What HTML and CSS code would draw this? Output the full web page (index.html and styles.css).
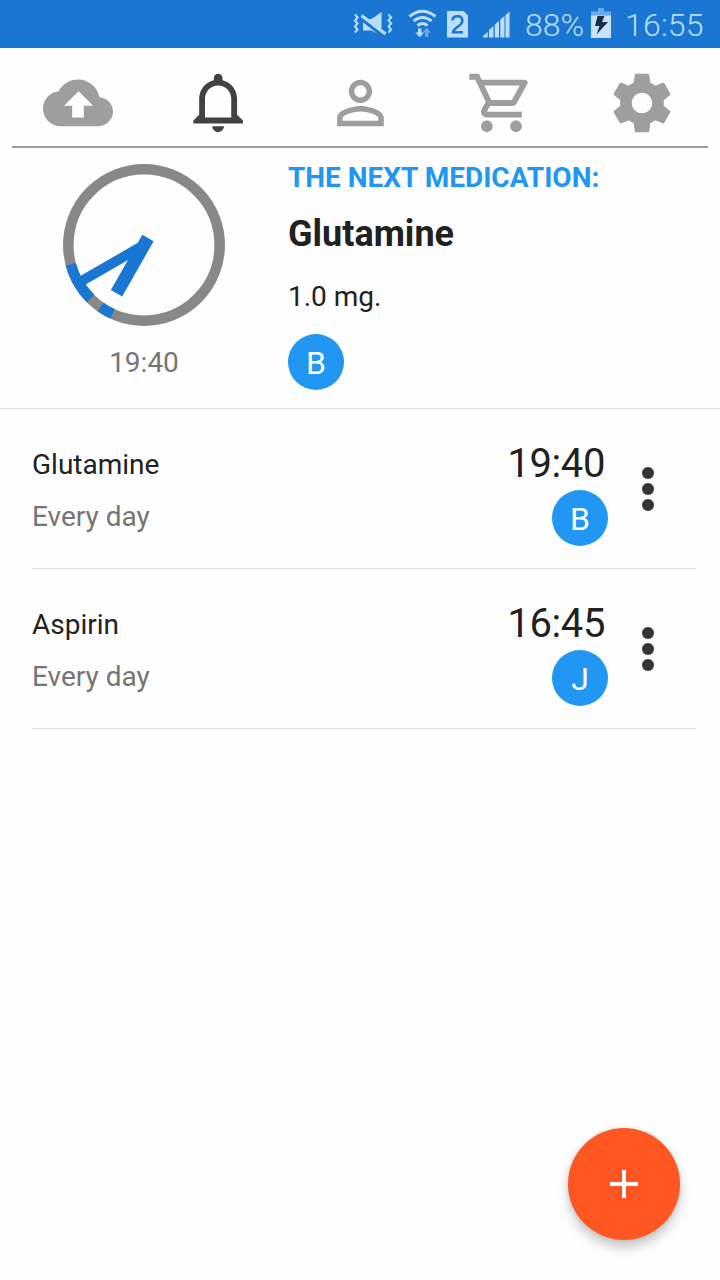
FILE: index.html
```html
<!DOCTYPE html>
<html lang="en">
<head>
<meta charset="utf-8">
<title>Medication reminders</title>
<link rel="stylesheet" href="styles.css">
</head>
<body>
<div class="app">
  <header class="status">
    <svg class="st-mute" width="40" height="48" viewBox="353 0 40 48">
      <g fill="none" stroke="#bbdefb" stroke-width="2"><path d="M355 14.500l2.600 3-2.600 3 2.600 3-2.600 3 2.600 3-2.600 3M388.500 14.500l2.600 3-2.600 3 2.600 3-2.600 3 2.600 3-2.600 3"/></g>
      <path fill="#bbdefb" d="M363 19h8.500L381.500 12V35.500L371.500 30.500H363z"/>
      <path d="M361 17L384.500 35.500" stroke="#1976d2" stroke-width="6"/>
      <path d="M361.500 15.500L385.500 34" stroke="#bbdefb" stroke-width="3.200"/>
    </svg>
    <svg class="st-wifi" width="30" height="48" viewBox="408 0 30 48">
      <g fill="none" stroke="#bbdefb" stroke-width="3"><path d="M409.500 16.500q13-10.500 26 0M413.500 21q9-7 18 0M417.500 25.500q5-4 10 0"/></g>
      <path fill="#bbdefb" d="M418 28.500h3.500v4h2.700l-4.400 4.800-4.500-4.800h2.700z"/>
      <path fill="#64a8e6" d="M426.700 27.500l4.200 5h-2.500V37h-3.300v-4.500h-2.600z"/>
    </svg>
    <svg class="st-sim" width="22" height="48" viewBox="447 0 22 48">
      <path fill="#bbdefb" d="M447 11h16.500l4.500 4.500V37.500h-21z"/>
      <path d="M452.500 20.500q0-4.200 5-4.200 4.800 0 4.800 4.200 0 2.700-3.300 5.300-5.700 4-6 6.400h10" fill="none" stroke="#1976d2" stroke-width="2.600"/>
    </svg>
    <svg class="st-signal" width="29" height="48" viewBox="482 0 29 48">
      <path fill="#bbdefb" d="M483 37.500v-1.500l4.700-4v5.500zM489 37.500v-7.500l4.500-4v11.500zM494.800 37.500v-13l4.200-3.500v16.500zM500.300 37.500v-18l4.200-3.500v21.500zM505.500 37.500v-22.500l4-3.400v25.900z"/>
    </svg>
    <span class="st-pct">88%</span>
    <svg class="st-batt" width="20" height="48" viewBox="591 0 20 48">
      <path fill="#64acef" d="M598 8h6v3.500h7V16h-20v-4.500h7z"/>
      <path fill="#c9e2f8" d="M591 15.500h20V38h-20z"/>
      <path fill="#172f4b" d="M597.500 16h7l-2.500 6h6L596.500 34.500l3-8.500h-4.500z"/>
    </svg>
    <span class="st-time">16:55</span>
  </header>

  <nav class="tabs">
    <svg class="tab" viewBox="0 0 24 24"><path d="M19.350 10.040C18.670 6.590 15.640 4 12 4 9.110 4 6.600 5.640 5.350 8.040 2.340 8.360 0 10.910 0 14c0 3.310 2.690 6 6 6h13c2.760 0 5-2.240 5-5 0-2.640-2.050-4.780-4.650-4.960zM14 13v4h-4v-4H7.200l5-5 5 5h-3.200z" transform="translate(0 -.05)"/></svg>
    <svg class="tab active" viewBox="0 0 24 24"><path transform="translate(.2 0)" d="M11.500 22c1.100 0 2-.9 2-2h-4c0 1.100.9 2 2 2zm6.500-6v-5.500c0-3.070-2.130-5.640-5-6.320V3.500c0-.83-.67-1.500-1.500-1.500S10 2.670 10 3.500v.68c-2.870.68-5 3.250-5 6.320V16l-2 2v1h17v-1l-2-2zm-2 1H7v-6.500C7 8.010 9.010 6 11.500 6S16 8.010 16 10.500V17z"/></svg>
    <svg class="tab" viewBox="0 0 24 24"><path transform="translate(.15 0)" d="M12 5.900c1.160 0 2.100.94 2.100 2.100s-.94 2.100-2.100 2.100S9.900 9.160 9.900 8s.94-2.100 2.100-2.100m0 9c2.970 0 6.100 1.460 6.100 2.100v1.100H5.900V17c0-.64 3.130-2.100 6.100-2.100M12 4C9.790 4 8 5.790 8 8s1.790 4 4 4 4-1.790 4-4-1.790-4-4-4zm0 9c-2.670 0-8 1.340-8 4v3h16v-3c0-2.660-5.330-4-8-4z"/></svg>
    <svg class="tab" viewBox="0 0 24 24"><path transform="translate(.15 0)" d="M15.550 13c.75 0 1.410-.41 1.750-1.030l3.580-6.490C21.250 4.820 20.770 4 20.010 4H5.210l-.94-2H1v2h2l3.600 7.590-1.350 2.440C4.520 15.370 5.480 17 7 17h12v-2H7l1.100-2h7.450zM6.160 6h12.150l-2.760 5H8.530L6.160 6zM7 18c-1.100 0-1.990.9-1.990 2S5.900 22 7 22s2-.9 2-2-.9-2-2-2zm10 0c-1.100 0-1.990.9-1.990 2s.89 2 1.990 2 2-.9 2-2-.9-2-2-2z"/></svg>
    <svg class="tab" viewBox="0 0 24 24"><path d="M19.430 12.980c.04-.32.07-.64.07-.98s-.03-.66-.07-.98l2.110-1.650c.19-.15.24-.42.12-.64l-2-3.460c-.12-.22-.39-.3-.61-.22l-2.490 1c-.52-.4-1.080-.73-1.690-.98l-.38-2.650C14.460 2.180 14.250 2 14 2h-4c-.25 0-.46.18-.49.42l-.38 2.650c-.61.25-1.170.59-1.690.98l-2.490-1c-.23-.09-.49 0-.61.22l-2 3.460c-.13.22-.07.49.12.64l2.110 1.650c-.04.32-.07.65-.07.98s.03.66.07.98l-2.110 1.650c-.19.15-.24.42-.12.64l2 3.460c.12.22.39.3.61.22l2.490-1c.52.4 1.080.73 1.690.98l.38 2.650c.03.24.24.42.49.42h4c.25 0 .46-.18.49-.42l.38-2.650c.61-.25 1.170-.59 1.690-.98l2.490 1c.23.09.49 0 .61-.22l2-3.460c.12-.22.07-.49-.12-.64l-2.110-1.650zM12 15.500c-1.930 0-3.500-1.570-3.500-3.500s1.570-3.500 3.500-3.500 3.500 1.570 3.500 3.500-1.570 3.500-3.500 3.500z"/></svg>
  </nav>

  <section class="next">
    <div class="clock">
      <svg width="162" height="162" viewBox="-81 -81 162 162" fill="none">
        <circle r="75.700" stroke="#888" stroke-width="10.600"/>
        <path d="M-53.500 53.500A75.700 75.700 0 0 1 -73.200 19.400M-31.600 68.800A75.700 75.700 0 0 1 -43.400 62" stroke="#1976d2" stroke-width="10.600"/>
        <path d="M-2 1.200L-63 36.400" stroke="#1976d2" stroke-width="10"/>
        <path d="M4 -6.900L-27.500 48.200" stroke="#1976d2" stroke-width="13"/>
      </svg>
      <div class="clock-time">19:40</div>
    </div>
    <div class="details">
      <div class="label">THE NEXT MEDICATION:</div>
      <div class="drug">Glutamine</div>
      <div class="dose">1.0 mg.</div>
      <div class="avatar">B</div>
    </div>
  </section>

  <main class="list">
    <div class="item">
      <div class="info"><div class="name">Glutamine</div><div class="repeat">Every day</div></div>
      <div class="when"><div class="time">19:40</div><div class="avatar">B</div></div>
      <div class="more"><i></i><i></i><i></i></div>
    </div>
    <div class="item">
      <div class="info"><div class="name">Aspirin</div><div class="repeat">Every day</div></div>
      <div class="when"><div class="time">16:45</div><div class="avatar">J</div></div>
      <div class="more"><i></i><i></i><i></i></div>
    </div>
  </main>

  <button class="fab" aria-label="Add"><svg width="48" height="48" viewBox="0 0 24 24"><path fill="#fff" d="M19 13h-6v6h-2v-6H5v-2h6V5h2v6h6v2z"/></svg></button>
</div>
</body>
</html>
```
FILE: styles.css
```css
* { box-sizing: border-box; }
body { margin: 0; background: #fefefe; color: #212121; font: 28px/32px Roboto, "Noto Sans", sans-serif; }
.app { width: 720px; height: 1280px; position: relative; overflow: hidden; }
svg { display: block; flex: none; }

.status { height: 48px; display: flex; justify-content: flex-end; align-items: center; padding-right: 16px; background: #1976d2; color: #bbdefb; font-size: 32px; font-weight: 300; white-space: nowrap; }
.st-wifi { margin-left: 15px; }
.st-sim { margin-left: 9px; }
.st-signal { margin-left: 13px; }
.st-pct { width: 66px; margin-left: 14px; padding-top: 1px; }
.st-time { width: 79px; margin-left: 14px; padding-top: 1px; letter-spacing: .2px; }

.tabs { height: 100px; margin: 0 12px; padding: 20px 31px 0; display: flex; justify-content: space-between; border-bottom: 2px solid #9e9e9e; }
.tab { width: 70px; height: 70px; fill: #9e9e9e; }
.tab.active { fill: #424242; }

.next { height: 261px; display: flex; border-bottom: 1px solid #e0e0e0; }
.clock { width: 288px; padding-top: 16px; display: flex; flex-direction: column; align-items: center; }
.clock-time { margin-top: 21px; color: #757575; }
.details { padding-top: 14px; }
.label { color: #2196f3; font-weight: 700; }
.drug { margin-top: 19px; font-size: 36px; line-height: 42px; font-weight: 700; }
.dose { margin-top: 26px; }
.details .avatar { margin-top: 21px; }
.avatar { width: 56px; height: 56px; border-radius: 50%; background: #2196f3; color: #fff; font-size: 32px; line-height: 58px; text-align: center; }

.item { height: 160px; margin: 0 24px 0 32px; display: flex; border-bottom: 1px solid #e0e0e0; }
.info { flex: 1; padding-top: 40px; }
.repeat { margin-top: 20px; color: #757575; }
.when { padding-top: 31px; display: flex; flex-direction: column; align-items: flex-end; }
.time { margin-right: 3px; font-size: 40px; line-height: 48px; letter-spacing: -.4px; }
.when .avatar { margin-top: 2px; }
.more { width: 80px; margin-right: 8px; padding-top: 58px; display: flex; flex-direction: column; align-items: center; gap: 4px; }
.more i { width: 12px; height: 12px; border-radius: 50%; background: #333; }

.fab { position: absolute; right: 40px; bottom: 40px; width: 112px; height: 112px; padding: 0; border: 0; border-radius: 50%; background: #ff5722; display: grid; place-items: center; box-shadow: 0 8px 12px rgba(0,0,0,.2), 0 0 5px rgba(0,0,0,.12); }
```
